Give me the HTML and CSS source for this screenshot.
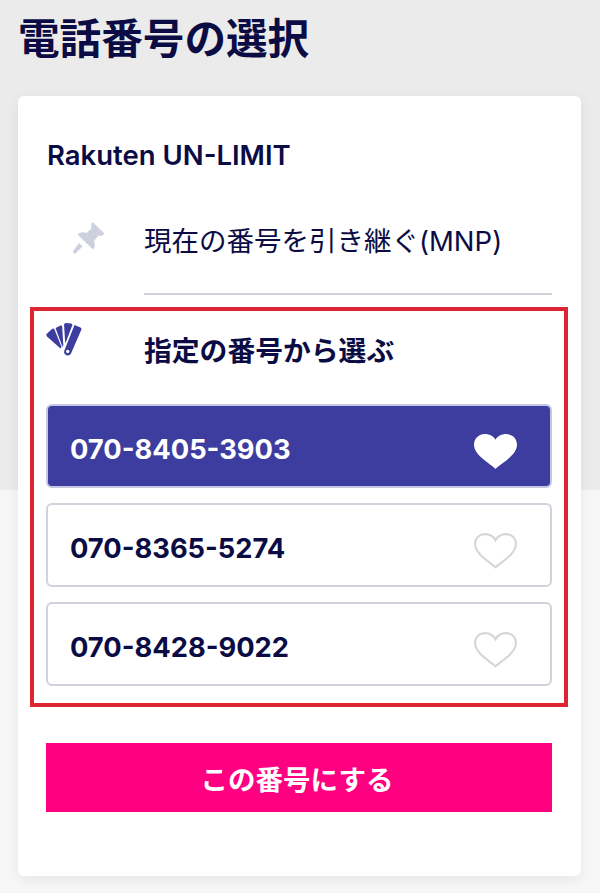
FILE: index.html
```html
<!DOCTYPE html>
<html lang="ja">
<head>
    <meta charset="UTF-8">
    <meta name="viewport" content="width=device-width, initial-scale=1.0">
    <title>電話番号の選択</title>
    <link rel="stylesheet" href="styles.css">
</head>
<body>

    <h1 class="page-title">電話番号の選択</h1>

    <div class="card">
        <div class="plan-name">Rakuten UN-LIMIT</div>

        <div class="option">
            <div class="option-icon">
                <svg class="pin-icon" viewBox="0 0 34 34">
                    <path d="M20.500 1 L32.500 12.500 L29.500 15 L26.500 14.500 L22 20 C23.500 23.500 23 26 21 28.500 L5.500 13.500 C8 11.200 11.500 10.500 14.500 12 L19.500 7.500 C19 5 19 3 20.500 1 Z" fill="#cdd0df"/>
                    <path d="M7 22 L10.500 25.500 L3.500 32.500 C2 33 0.800 31.800 1.200 30 Z" fill="#cdd0df"/>
                </svg>
            </div>
            <div class="option-label">現在の番号を引き継ぐ(MNP)</div>
        </div>

        <div class="highlight">
            <div class="choice-head">
                <svg class="fan-icon" viewBox="0 0 36 33">
                    <g fill="#3d3da0">
                        <path d="M0.500 11 L6 6 Q7.500 5 8.500 6.500 L15.500 24 L14.500 25.500 L1 13.500 Q0 12.200 0.500 11 Z"/>
                        <path d="M9.500 5 L14.500 2.500 Q16 2 16.200 3.800 L17.300 22 L16.500 24 Z"/>
                        <path d="M18 1.500 Q18.200 0 20 0 L25 0.500 Q26.500 0.800 26.300 2.200 L21.500 15 L19.200 20.500 Z"/>
                        <path d="M28.500 2 L34.500 4.500 Q36 5.300 35.300 6.800 L25 30.500 Q23.500 33 20.500 32.200 Q17.500 31 18.200 28 Z"/>
                    </g>
                    <circle cx="21.700" cy="28.500" r="1.700" fill="#fff"/>
                </svg>
                <span class="choice-title">指定の番号から選ぶ</span>
            </div>

            <div class="number-list">
                <div class="number-row selected">
                    <span class="number">070-8405-3903</span>
                    <svg class="heart" viewBox="0 0 44 36">
                        <path d="M22 35 C17 30 1 22 1 11.500 C1 5 6 1 11.500 1 C16 1 20 3 22 6.500 C24 3 28 1 32.500 1 C38 1 43 5 43 11.500 C43 22 27 30 22 35 Z" fill="#fff"/>
                    </svg>
                </div>
                <div class="number-row">
                    <span class="number">070-8365-5274</span>
                    <svg class="heart" viewBox="0 0 44 36">
                        <path d="M22 34.500 C17 29.500 2 22 2 11.500 C2 5.500 6.500 2 11.500 2 C16 2 20 4 22 8 C24 4 28 2 32.500 2 C37.500 2 42 5.500 42 11.500 C42 22 27 29.500 22 34.500 Z" fill="none" stroke="#d6d6d6" stroke-width="2"/>
                    </svg>
                </div>
                <div class="number-row">
                    <span class="number">070-8428-9022</span>
                    <svg class="heart" viewBox="0 0 44 36">
                        <path d="M22 34.500 C17 29.500 2 22 2 11.500 C2 5.500 6.500 2 11.500 2 C16 2 20 4 22 8 C24 4 28 2 32.500 2 C37.500 2 42 5.500 42 11.500 C42 22 27 29.500 22 34.500 Z" fill="none" stroke="#d6d6d6" stroke-width="2"/>
                    </svg>
                </div>
            </div>
        </div>

        <button class="submit-button">この番号にする</button>
    </div>

</body>
</html>
```

FILE: styles.css
```css
body {
    font-family: Inter, "Noto Sans CJK JP", sans-serif;
    margin: 0;
    padding: 0 19px 16px 18px;
    height: 893px;
    box-sizing: border-box;
    overflow: hidden;
    background: linear-gradient(#ebebeb 490px, #f7f7f7 490px);
    color: #0c0c45;
}

.page-title {
    margin: 0;
    height: 96px;
    padding: 14px 0 0 0;
    box-sizing: border-box;
    font-size: 41.600px;
    line-height: 50px;
    font-weight: 700;
}

.card {
    height: 780px;
    box-sizing: border-box;
    background: white;
    border-radius: 6px;
    padding: 40px 29px 0 28px;
    box-shadow: 0 4px 14px rgba(20, 20, 70, 0.07);
}

.plan-name {
    font-size: 27.500px;
    line-height: 38px;
    font-weight: 600;
    padding-left: 1px;
}

.option {
    display: flex;
    margin-top: 32px;
}

.option-icon {
    width: 98px;
    padding: 15px 0 0 26px;
    box-sizing: border-box;
}

.pin-icon {
    display: block;
    width: 34px;
    height: 34px;
}

.option-label {
    flex: 1;
    height: 89px;
    font-size: 27.500px;
    line-height: 40px;
    padding-top: 15px;
    border-bottom: 2px solid #cfd1dc;
    box-sizing: border-box;
}

.highlight {
    margin: 12px -16px 0;
    padding: 12px;
    height: 400px;
    box-sizing: border-box;
    border: 4px solid #de2533;
}

.choice-head {
    display: flex;
    height: 81px;
}

.fan-icon {
    display: block;
    width: 36px;
    height: 33px;
    margin-right: 62px;
}

.choice-title {
    font-size: 27.800px;
    line-height: 44px;
    padding-top: 6px;
    font-weight: 700;
}

.number-list {
    display: flex;
    flex-direction: column;
    gap: 15px;
}

.number-row {
    display: flex;
    align-items: center;
    justify-content: space-between;
    height: 84px;
    box-sizing: border-box;
    padding: 6px 32px 0 22px;
    background: white;
    border: 2px solid #d0d2dc;
    border-radius: 6px;
}

.number-row.selected {
    background: #3d3da0;
    border-color: #c5c6e2;
    color: white;
}

.number {
    font-size: 27.300px;
    font-weight: 700;
}

.heart {
    display: block;
    width: 45px;
    height: 37px;
    margin-top: 4px;
}

.submit-button {
    display: block;
    width: 100%;
    height: 69px;
    margin-top: 36px;
    padding: 0 4px 0 0;
    border: none;
    background-color: #ff0080;
    color: white;
    font-family: inherit;
    font-size: 27.500px;
    font-weight: 700;
}
```
